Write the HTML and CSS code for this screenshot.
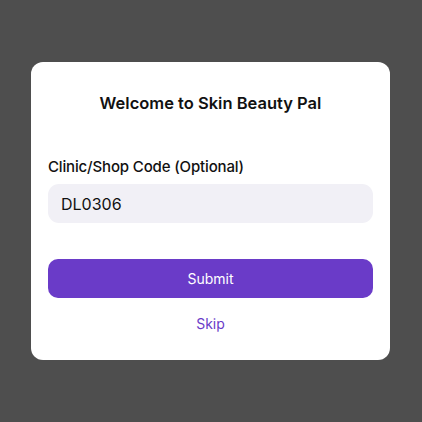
FILE: index.html
```html
<!DOCTYPE html>
<html>
<head>
<meta charset="utf-8">
<link rel="stylesheet" href="styles.css">
</head>
<body>
<div class="overlay">
  <div class="card">
    <h1 class="title">Welcome to Skin Beauty Pal</h1>
    <label class="label">Clinic/Shop Code (Optional)</label>
    <div class="input">DL0306</div>
    <button class="submit">Submit</button>
    <div class="skip">Skip</div>
  </div>
</div>
</body>
</html>
```
FILE: styles.css
```css
html, body {
  margin: 0;
  padding: 0;
  width: 422px;
  height: 422px;
  background: #4e4e4e;
  font-family: "Inter", "Liberation Sans", sans-serif;
}
.overlay {
  width: 422px;
  height: 422px;
  display: flex;
  align-items: flex-start;
  justify-content: center;
}
.card {
  width: 359px;
  box-sizing: border-box;
  background: #fff;
  border-radius: 12px;
  padding: 30px 17px 26px;
  display: flex;
  flex-direction: column;
  margin-top: 62px;
  margin-left: -1px;
}
.title {
  margin: 0;
  text-align: center;
  font-size: 16.5px;
  font-weight: 600;
  color: #111;
  line-height: 22px;
}
.label {
  margin-top: 43px;
  font-size: 15px;
  letter-spacing: -0.15px;
  font-weight: 500;
  color: #111;
  line-height: 20px;
}
.input {
  margin-top: 7px;
  height: 39px;
  background: #f1f0f6;
  border-radius: 11px;
  padding: 0 13px;
  display: flex;
  align-items: center;
  font-size: 16px;
  color: #111;
}
.submit {
  margin-top: 36px;
  height: 39px;
  border: none;
  background: #6a3bc8;
  border-radius: 10px;
  color: #fff;
  font-family: inherit;
  font-size: 14px;
  font-weight: 400;
}
.skip {
  margin-top: 16px;
  text-align: center;
  color: #6a3bc8;
  font-size: 14px;
  line-height: 20px;
}
```
